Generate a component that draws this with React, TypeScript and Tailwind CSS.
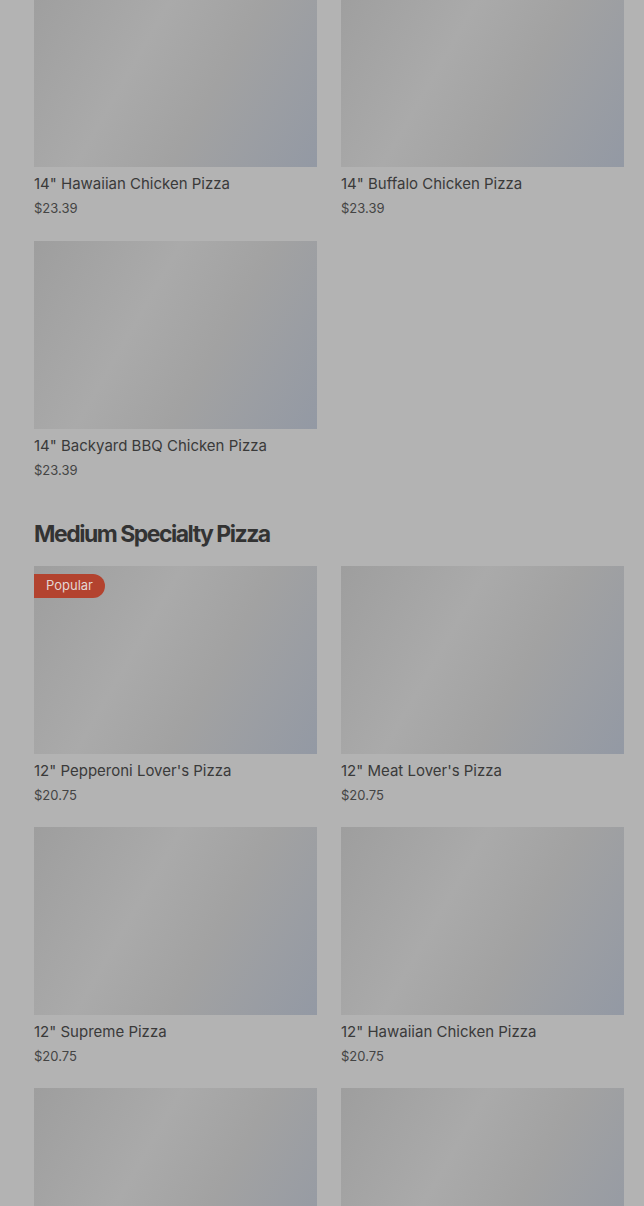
import React from "react";

type Item = { name?: string; price?: string; popular?: boolean };

const top: Item[] = [
  { name: "14\" Hawaiian Chicken Pizza", price: "$23.39" },
  { name: "14\" Buffalo Chicken Pizza", price: "$23.39" },
  { name: "14\" Backyard BBQ Chicken Pizza", price: "$23.39" },
];

const medium: Item[] = [
  { name: "12\" Pepperoni Lover's Pizza", price: "$20.75", popular: true },
  { name: "12\" Meat Lover's Pizza", price: "$20.75" },
  { name: "12\" Supreme Pizza", price: "$20.75" },
  { name: "12\" Hawaiian Chicken Pizza", price: "$20.75" },
  {},
  {},
];

function Card({ item }: { item: Item }) {
  return (
    <div className="flex flex-col">
      <div className="relative h-[188px] w-full bg-[linear-gradient(120deg,#9e9e9e_0%,#aaaaaa_38%,#a2a2a2_62%,#9399a4_100%)]">
        {item.popular && (
          <span className="absolute left-0 top-2 flex h-6 items-center rounded-r-full bg-[#b3432f] px-3 text-[13px] text-[#e3d6d3] [font-family:Inter,'Noto_Sans',sans-serif]">
            Popular
          </span>
        )}
      </div>
      {item.name && (
        <>
          <div className="mt-[5px] text-[15px] leading-6 text-[#3a3a3a] [font-family:Inter,'Noto_Sans',sans-serif]">
            {item.name}
          </div>
          <div className="mt-[2px] text-[13px] leading-5 text-[#444444] [font-family:Inter,'Noto_Sans',sans-serif]">
            {item.price}
          </div>
        </>
      )}
    </div>
  );
}

export default function App() {
  return (
    <div className="h-[1206px] overflow-hidden bg-[#b3b3b3]">
      <div className="-mt-[21px] pl-[34px] pr-[20px]">
        <div className="grid grid-cols-2 gap-x-6 gap-y-[23px]">
          {top.map((it, i) => (
            <Card key={i} item={it} />
          ))}
        </div>
        <h2 className="mt-[38px] mb-[16px] text-[23px] font-bold leading-8 tracking-[-0.065em] text-[#333333] [font-family:Inter,'Noto_Sans',sans-serif]">
          Medium Specialty Pizza
        </h2>
        <div className="grid grid-cols-2 gap-x-6 gap-y-[22px]">
          {medium.map((it, i) => (
            <Card key={i} item={it} />
          ))}
        </div>
      </div>
    </div>
  );
}
